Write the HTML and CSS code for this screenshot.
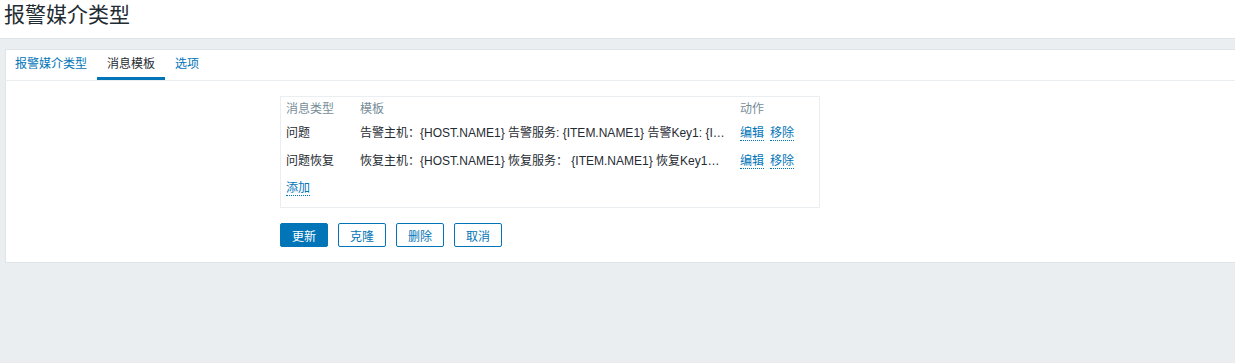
FILE: index.html
```html
<!DOCTYPE html>
<html lang="zh">
<head>
    <meta charset="UTF-8">
    <title>报警媒介类型</title>
    <link rel="stylesheet" href="styles.css">
</head>
<body>
    <header class="page-header">
        <h1>报警媒介类型</h1>
    </header>
    <main class="wrapper">
        <div class="tabs">
            <a class="tab">报警媒介类型</a>
            <a class="tab active">消息模板</a>
            <a class="tab">选项</a>
        </div>
        <div class="form">
            <div class="table-box">
                <table>
                    <thead>
                        <tr>
                            <th class="col-type">消息类型</th>
                            <th class="col-tpl">模板</th>
                            <th>动作</th>
                        </tr>
                    </thead>
                    <tbody>
                        <tr>
                            <td>问题</td>
                            <td><div class="tpl">告警主机：{HOST.NAME1} 告警服务: {ITEM.NAME1} 告警Key1: {ITEM.KEY1} 告警信息: {TRIGGER.NAME}</div></td>
                            <td class="actions"><a class="link">编辑</a><a class="link">移除</a></td>
                        </tr>
                        <tr>
                            <td>问题恢复</td>
                            <td><div class="tpl">恢复主机：{HOST.NAME1} 恢复服务： {ITEM.NAME1} 恢复Key1：{ITEM.KEY1} 恢复信息</div></td>
                            <td class="actions"><a class="link">编辑</a><a class="link">移除</a></td>
                        </tr>
                        <tr class="add-row">
                            <td colspan="3"><a class="link">添加</a></td>
                        </tr>
                    </tbody>
                </table>
            </div>
            <div class="buttons">
                <button class="btn primary">更新</button>
                <button class="btn">克隆</button>
                <button class="btn">删除</button>
                <button class="btn">取消</button>
            </div>
        </div>
    </main>
</body>
</html>
```

FILE: styles.css
```css
* {
    box-sizing: border-box;
}
body {
    margin: 0;
    background-color: #ebeef0;
    font-family: "Liberation Sans", Arial, "Noto Sans CJK SC", sans-serif;
    font-size: 12px;
    color: #1f2c33;
    overflow: hidden;
}
.page-header {
    height: 39px;
    background-color: white;
    border-bottom: 1px solid #dfe4e7;
    padding-left: 4px;
}
h1 {
    margin: 0;
    font-size: 21px;
    font-weight: normal;
    line-height: 30px;
}
.wrapper {
    margin: 10px -10px 0 5px;
    background-color: white;
    border: 1px solid #dfe4e7;
}
.tabs {
    display: flex;
    height: 31px;
    padding-left: 0;
    margin-left: -1px;
    border-bottom: 1px solid #ebeef0;
}
.tab {
    padding: 0 10px;
    line-height: 28px;
    color: #0275b8;
    border-bottom: 3px solid transparent;
    cursor: pointer;
}
.tab.active {
    color: #1f2c33;
    border-bottom-color: #0275b8;
}
.form {
    padding: 15px 0 15px 274px;
}
.table-box {
    width: 540px;
    border: 1px solid #ebeef0;
}
table {
    width: 100%;
    border-collapse: collapse;
}
th {
    text-align: left;
    font-weight: normal;
    color: #768d99;
    padding: 5px 5px 3px;
    line-height: 14px;
}
td {
    padding: 7px 5px;
    line-height: 14px;
    vertical-align: middle;
}
.col-type {
    width: 74px;
}
.col-tpl {
    width: 380px;
}
.tpl {
    width: 368px;
    white-space: nowrap;
    overflow: hidden;
    text-overflow: ellipsis;
}
.actions {
    white-space: nowrap;
}
.link {
    color: #0275b8;
    border-bottom: 1px dotted #0275b8;
    cursor: pointer;
}
.actions .link + .link {
    margin-left: 6px;
}
.add-row td {
    padding: 6px 5px 12px;
}
.buttons {
    display: flex;
    gap: 10px;
    margin-top: 15px;
}
.btn {
    height: 24px;
    width: 48px;
    padding: 0;
    font-family: inherit;
    font-size: 12px;
    color: #0275b8;
    background-color: white;
    border: 1px solid #0275b8;
    border-radius: 2px;
    cursor: pointer;
}
.btn.primary {
    background-color: #0275b8;
    color: white;
}
```
